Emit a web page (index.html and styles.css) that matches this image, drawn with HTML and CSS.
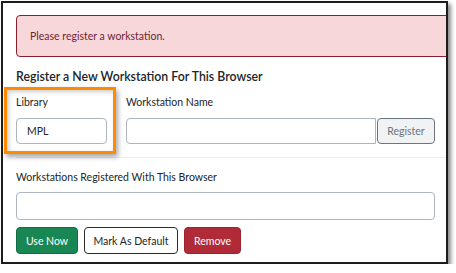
FILE: index.html
```html
<!DOCTYPE html>
<html lang="en">
<head>
    <meta charset="UTF-8">
    <title>Workstation Registration</title>
    <link rel="stylesheet" href="styles.css">
</head>
<body>
    <div class="frame">
        <div class="page">
            <div class="alert">Please register a workstation.</div>

            <h2 class="section-title">Register a New Workstation For This Browser</h2>

            <div class="register-row">
                <div class="field field-library">
                    <label for="library">Library</label>
                    <input type="text" id="library" class="text-input" value="MPL">
                </div>
                <div class="field field-name">
                    <label for="ws-name">Workstation Name</label>
                    <div class="input-group">
                        <input type="text" id="ws-name" class="text-input">
                        <button class="btn btn-register" disabled>Register</button>
                    </div>
                </div>
            </div>

            <hr class="divider">

            <label for="ws-list" class="list-label">Workstations Registered With This Browser</label>
            <select id="ws-list" class="ws-select" size="1"></select>

            <div class="actions">
                <button class="btn btn-success">Use Now</button>
                <button class="btn btn-outline">Mark As Default</button>
                <button class="btn btn-danger">Remove</button>
            </div>
        </div>

        <!-- callout drawn over the screenshot -->
        <div class="highlight"></div>
    </div>
</body>
</html>
```

FILE: styles.css
```css
body {
    margin: 0;
    background-color: #fff;
    font-family: 'Lato', 'Open Sans', sans-serif;
    font-size: 10.5px;
    color: #212529;
}

.frame {
    position: relative;
    margin: 1px 0 0 1px;
    width: 443px;
    height: 259px;
    border: 2px solid #1c1c1c;
    background-color: #fff;
    box-shadow: 3px 3px 4px rgba(0, 0, 0, 0.45);
    overflow: hidden;
}

.page {
    padding: 12px 11px 0 13px;
}

.alert {
    margin-right: -20px;
    height: 40px;
    line-height: 40px;
    padding-left: 13px;
    color: #6e2530;
    background-color: #f8d7da;
    border: 1px solid #8c1d2c;
    border-radius: 4px;
}

.section-title {
    margin: 12px 0 0;
    font-size: 12.3px;
    font-weight: 600;
    line-height: 16px;
}

.register-row {
    display: flex;
    gap: 19px;
    margin-top: 9px;
}

.field label {
    display: block;
    line-height: 16px;
    margin-bottom: 8px;
}

.field-library {
    width: 91px;
}

.field-name {
    flex: 1;
}

.text-input {
    box-sizing: border-box;
    width: 100%;
    height: 26px;
    padding: 0 10px;
    font-family: inherit;
    font-size: 10.5px;
    color: #212529;
    border: 1px solid #adb5bd;
    border-radius: 4px;
    background-color: #fff;
}

.input-group {
    display: flex;
}

.input-group .text-input {
    flex: 1;
    border-radius: 4px 0 0 4px;
}

.btn {
    box-sizing: border-box;
    height: 27px;
    padding: 0;
    font-family: inherit;
    font-size: 10.5px;
    white-space: nowrap;
    border-radius: 4px;
    border: 1px solid transparent;
    cursor: pointer;
}

.btn-register {
    width: 58px;
    height: 26px;
    margin-left: 1px;
    color: #6c757d;
    background-color: #f1f2f4;
    border-color: #6c757d;
}

.divider {
    margin: 13px -11px 0 0;
    border: 0;
    border-top: 1px solid #eeeeee;
}

.list-label {
    display: block;
    margin-top: 11px;
    line-height: 16px;
}

.ws-select {
    display: block;
    box-sizing: border-box;
    width: 100%;
    height: 28px;
    margin-top: 7px;
    border: 1px solid #adb5bd;
    border-radius: 4px;
    background-color: #fff;
    appearance: none;
}

.actions {
    display: flex;
    gap: 6px;
    margin-top: 7px;
}

.btn-success {
    width: 62px;
    color: #fff;
    background-color: #198754;
    border-color: #146c43;
}

.btn-outline {
    width: 94px;
    color: #212529;
    background-color: #fff;
    border-color: #2b2b2b;
}

.btn-danger {
    width: 57px;
    color: #fff;
    background-color: #b02a37;
    border-color: #9a2430;
}

.highlight {
    position: absolute;
    left: 1px;
    top: 84px;
    width: 106px;
    height: 61px;
    border: 3px solid #ff8a00;
    box-shadow: 2px 3px 5px rgba(0, 0, 0, 0.35), inset 2px 2px 4px rgba(0, 0, 0, 0.2);
}
```
